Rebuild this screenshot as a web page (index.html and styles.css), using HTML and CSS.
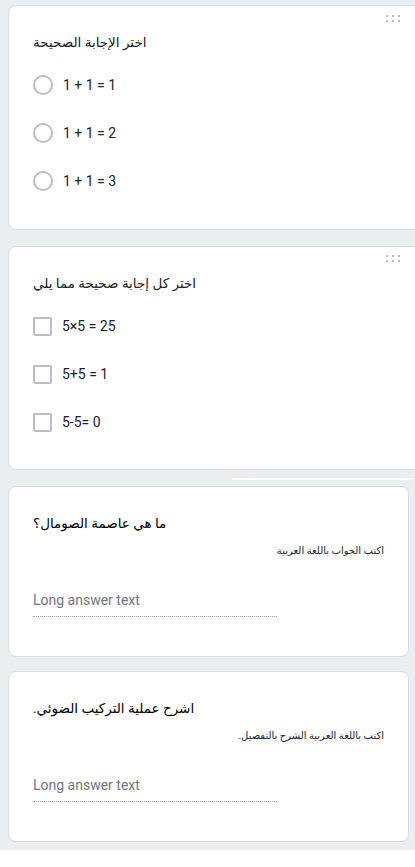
FILE: index.html
```html
<!DOCTYPE html>
<html lang="ar">
<head>
<meta charset="utf-8">
<title>Form</title>
<link rel="stylesheet" href="styles.css">
</head>
<body>
<div class="page">
  <div class="card card-wide card-first">
    <div class="handle"><i></i><i></i><i></i><i></i><i></i><i></i></div>
    <div class="q-title" dir="rtl">اختر الإجابة الصحيحة</div>
    <div class="options">
      <div class="opt"><span class="radio"></span><span class="opt-label">1 + 1 = 1</span></div>
      <div class="opt"><span class="radio"></span><span class="opt-label">1 + 1 = 2</span></div>
      <div class="opt"><span class="radio"></span><span class="opt-label">1 + 1 = 3</span></div>
    </div>
  </div>

  <div class="card card-wide">
    <div class="handle"><i></i><i></i><i></i><i></i><i></i><i></i></div>
    <div class="q-title" dir="rtl">اختر كل إجابة صحيحة مما يلي</div>
    <div class="options">
      <div class="opt"><span class="check"></span><span class="opt-label">5×5 = 25</span></div>
      <div class="opt"><span class="check"></span><span class="opt-label">5+5 = 1</span></div>
      <div class="opt"><span class="check"></span><span class="opt-label">5-5= 0</span></div>
    </div>
  </div>

  <div class="divider"></div>

  <div class="card card-text">
    <div class="q-title q-big" dir="rtl">ما هي عاصمة الصومال؟</div>
    <div class="q-desc" dir="rtl">اكتب الجواب باللغة العربية</div>
    <div class="answer">Long answer text</div>
  </div>

  <div class="card card-text">
    <div class="q-title q-big" dir="rtl">اشرح عملية التركيب الضوئي.</div>
    <div class="q-desc" dir="rtl">اكتب باللغة العربية الشرح بالتفصيل.</div>
    <div class="answer">Long answer text</div>
  </div>
</div>
</body>
</html>
```

FILE: styles.css
```css
html, body {
  margin: 0;
  padding: 0;
  background: #ffffff;
  overflow: hidden;
}

body {
  font-family: Roboto, Arial, "DejaVu Sans", sans-serif;
  color: #202124;
}

.page {
  background: #eaeef1;
  padding: 5px 0 8px 0;
  overflow: hidden;
}

.card {
  position: relative;
  background: #ffffff;
  border: 1px solid #dadce0;
  border-radius: 8px;
  margin-left: 8px;
  padding: 24px 24px 0 24px;
  box-sizing: border-box;
}

.card-wide {
  width: 430px;
  padding-bottom: 23px;
  margin-bottom: 16px;
}

.card-first {
  padding-bottom: 24px;
}

.card-text {
  width: 401px;
  padding-bottom: 39px;
  margin-bottom: 14px;
}

.card-text:last-child {
  margin-bottom: 0;
}

.handle {
  position: absolute;
  top: 8px;
  left: 377px;
  width: 16px;
  display: grid;
  grid-template-columns: repeat(3, 2px);
  column-gap: 4px;
  row-gap: 3px;
}

.card-first .handle {
  top: 9px;
}

.handle i {
  display: block;
  width: 2px;
  height: 2px;
  background: #bdbdbd;
}

.q-title {
  font-size: 13.5px;
  line-height: 24px;
  height: 24px;
  text-align: left;
  color: #202124;
}

.q-big {
  font-size: 13.5px;
  color: #000000;
}

.options {
  margin-top: 7px;
  display: flex;
  flex-direction: column;
}

.opt {
  height: 48px;
  display: flex;
  align-items: center;
}

.radio {
  width: 16px;
  height: 16px;
  border: 2px solid #bdbdbd;
  border-radius: 50%;
  flex: none;
}

.check {
  width: 15px;
  height: 15px;
  border: 2px solid #bdbdbd;
  border-radius: 2px;
  flex: none;
}

.opt-label {
  margin-left: 10px;
  font-size: 14px;
  color: #202124;
}

.divider {
  height: 2px;
  width: 181px;
  margin-left: 232px;
  background: #ffffff;
  margin-top: -8px;
  margin-bottom: 6px;
}

.q-desc {
  margin-top: 8px;
  font-size: 10px;
  line-height: 16px;
  text-align: right;
  color: #202124;
}

.answer {
  margin-top: 31px;
  width: 244px;
  font-size: 14px;
  line-height: 20px;
  padding-bottom: 6px;
  color: #70757a;
  border-bottom: 1px dotted #9aa0a6;
}
```
